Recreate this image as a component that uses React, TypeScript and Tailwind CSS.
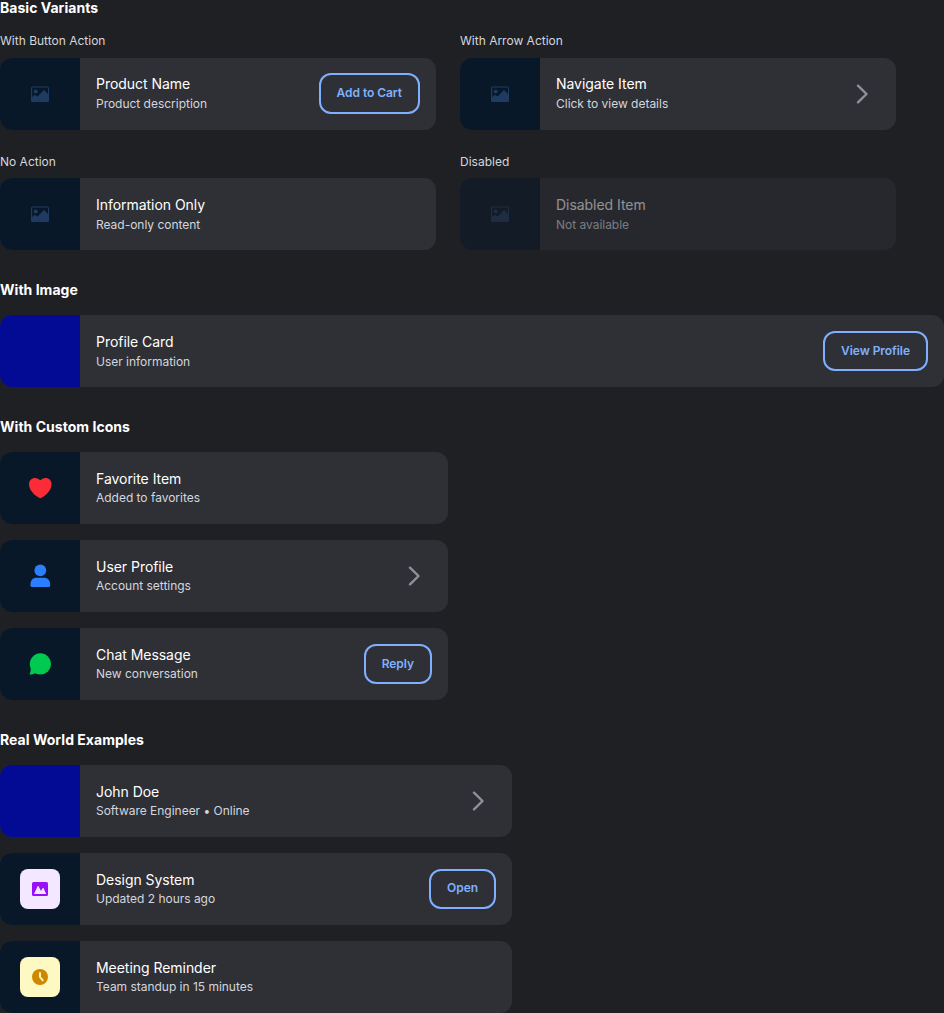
import type { ReactNode } from 'react';

function ImageIcon() {
  return (
    <svg width="18" height="16" viewBox="0 0 18 16" fill="#1f3b61">
      <path
        fillRule="evenodd"
        d="M1.6.5h14.800c.9 0 1.600.7 1.600 1.600v12.300c0 .9-.7 1.600-1.600 1.600H1.600C.7 16 0 15.300 0 14.400V2.100C0 1.200.7.500 1.600.500zM1.200 1.600v9.400l2.500-2.300 2.800 1.700L13 4l4 4V1.600z"
      />
      <circle cx="4.700" cy="5.400" r="2" />
    </svg>
  );
}

function HeartIcon() {
  return (
    <svg width="24" height="24" viewBox="0 0 24 24" fill="#fb2c36">
      <path d="M12.300 22.200C11.500 22.200 1 16.600 1 8.200 1 4.600 3.600 1.900 7 1.900c2.200 0 4.100 1 5.300 2.300 1.200-1.300 3.100-2.300 5.300-2.300 3.400 0 6 2.700 6 6.300 0 8.400-10.500 14-11.300 14z" />
    </svg>
  );
}

function UserIcon() {
  return (
    <svg width="24" height="24" viewBox="0 0 24 24" fill="#2b7fff">
      <circle cx="12.300" cy="6.300" r="5.900" />
      <path d="M8.300 13.800h7.800c3.400 0 6 2.700 6 6.200v1.500c0 .9-.6 1.500-1.500 1.500H4c-.9 0-1.500-.6-1.500-1.500V20c0-3.500 2.400-6.200 5.800-6.200z" />
    </svg>
  );
}

function ChatIcon() {
  return (
    <svg width="24" height="24" viewBox="0 0 24 24" fill="#00c950">
      <circle cx="12.400" cy="11.900" r="10.600" />
      <path d="M2.700 15.500c.2 2.300-.1 4.300-.9 6-.3.600 0 1.200.6 1.100 2-.1 4-.7 5.600-1.600z" />
    </svg>
  );
}

function DesignIcon() {
  return (
    <svg width="16" height="14" viewBox="0 0 16 14">
      <rect width="16" height="14" rx="1.500" fill="#9810fa" />
      <path d="M2 12l3.500-7.600c.3-.6.900-.6 1.200 0L9 9l1.500-2.700c.3-.5.800-.5 1.100 0L14.200 12z" fill="#f3e8ff" />
    </svg>
  );
}

function ClockIcon() {
  return (
    <svg width="16" height="16" viewBox="0 0 16 16" fill="none">
      <circle cx="8" cy="8" r="8" fill="#d08700" />
      <path d="M8 3.200V8l3.200 3.800" stroke="#fef9c2" strokeWidth="1.900" />
    </svg>
  );
}

function Arrow() {
  return (
    <svg className="mr-3" width="12" height="20" viewBox="0 0 12 20" fill="none">
      <path d="M2 1.700L10.500 10 2 18.300" stroke="#8f9098" strokeWidth="2.400" strokeLinecap="round" strokeLinejoin="round" />
    </svg>
  );
}

function ActionButton({ children }: { children: ReactNode }) {
  return (
    <button className="h-[40.4px] shrink-0 rounded-xl border-2 border-[#7fb0ff] px-4 pb-[0.2px] text-xs leading-[14.4px] font-semibold tracking-[-0.05px] text-[#7fb0ff]">
      {children}
    </button>
  );
}

interface CardProps {
  title: string;
  description: string;
  icon?: ReactNode;
  image?: boolean;
  disabled?: boolean;
  action?: ReactNode;
}

function Card({ title, description, icon = <ImageIcon />, image, disabled, action }: CardProps) {
  return (
    <div className={`flex h-[72px] overflow-hidden rounded-xl bg-[#2f3036] ${disabled ? 'opacity-50' : ''}`}>
      <div className={`flex w-20 shrink-0 items-center justify-center ${image ? 'bg-[#030b94]' : 'bg-[#081828]'}`}>
        {!image && icon}
      </div>
      <div className="flex flex-1 items-center justify-between px-4">
        <div className="flex flex-col gap-[3.5px] pt-[0.2px]">
          <p className="text-sm leading-[17px] tracking-[-0.04px] text-white">{title}</p>
          <p className="text-xs leading-4 tracking-[-0.02px] text-[#d4d6dd]">{description}</p>
        </div>
        {action}
      </div>
    </div>
  );
}

function Section({ title, children }: { title: string; children: ReactNode }) {
  return (
    <section className="flex flex-col gap-4">
      <h2 className="text-sm leading-[16.8px] font-bold tracking-[0.03px] text-white">{title}</h2>
      {children}
    </section>
  );
}

function Labelled({ label, children }: { label: string; children: ReactNode }) {
  return (
    <div className="flex flex-col gap-2">
      <p className="text-xs leading-[16.8px] text-[#d4d6dd]">{label}</p>
      {children}
    </div>
  );
}

export default function App() {
  return (
    <main className="flex min-h-screen flex-col gap-8 overflow-hidden bg-[#1f2024] font-['Inter',sans-serif]">
      <Section title="Basic Variants">
        <div className="grid max-w-4xl grid-cols-2 gap-6">
          <Labelled label="With Button Action">
            <Card title="Product Name" description="Product description" action={<ActionButton>Add to Cart</ActionButton>} />
          </Labelled>
          <Labelled label="With Arrow Action">
            <Card title="Navigate Item" description="Click to view details" action={<Arrow />} />
          </Labelled>
          <Labelled label="No Action">
            <Card title="Information Only" description="Read-only content" />
          </Labelled>
          <Labelled label="Disabled">
            <Card title="Disabled Item" description="Not available" disabled />
          </Labelled>
        </div>
      </Section>
      <Section title="With Image">
        <Card title="Profile Card" description="User information" image action={<ActionButton>View Profile</ActionButton>} />
      </Section>
      <Section title="With Custom Icons">
        <div className="flex max-w-md flex-col gap-4">
          <Card title="Favorite Item" description="Added to favorites" icon={<HeartIcon />} />
          <Card title="User Profile" description="Account settings" icon={<UserIcon />} action={<Arrow />} />
          <Card title="Chat Message" description="New conversation" icon={<ChatIcon />} action={<ActionButton>Reply</ActionButton>} />
        </div>
      </Section>
      <Section title="Real World Examples">
        <div className="flex max-w-lg flex-col gap-4">
          <Card title="John Doe" description="Software Engineer • Online" image action={<Arrow />} />
          <Card
            title="Design System"
            description="Updated 2 hours ago"
            icon={
              <div className="flex size-10 items-center justify-center rounded-lg bg-[#f3e8ff]">
                <DesignIcon />
              </div>
            }
            action={<ActionButton>Open</ActionButton>}
          />
          <Card
            title="Meeting Reminder"
            description="Team standup in 15 minutes"
            icon={
              <div className="flex size-10 items-center justify-center rounded-lg bg-[#fef9c2]">
                <ClockIcon />
              </div>
            }
          />
        </div>
      </Section>
    </main>
  );
}
